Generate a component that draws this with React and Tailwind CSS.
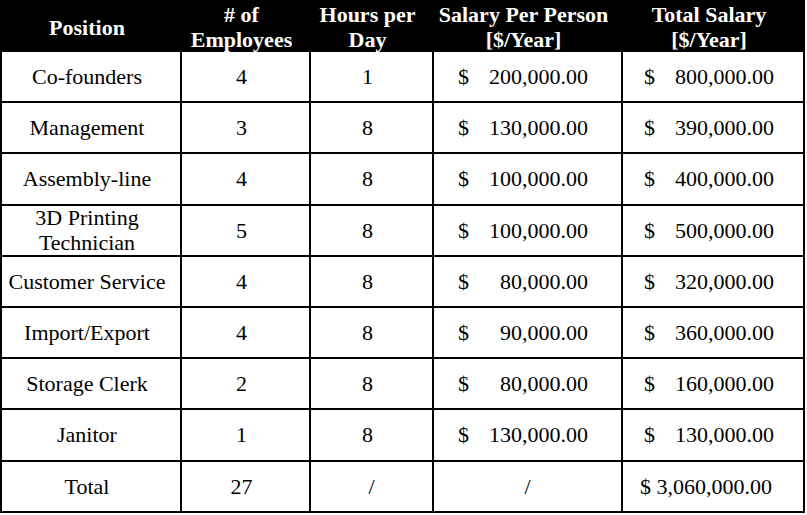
import React from 'react'

const rows = [
  { position: 'Co-founders', employees: '4', hours: '1', salary: '200,000.00', total: '800,000.00' },
  { position: 'Management', employees: '3', hours: '8', salary: '130,000.00', total: '390,000.00' },
  { position: 'Assembly-line', employees: '4', hours: '8', salary: '100,000.00', total: '400,000.00' },
  { position: ['3D Printing', 'Technician'], employees: '5', hours: '8', salary: '100,000.00', total: '500,000.00' },
  { position: 'Customer Service', employees: '4', hours: '8', salary: '80,000.00', total: '320,000.00' },
  { position: 'Import/Export', employees: '4', hours: '8', salary: '90,000.00', total: '360,000.00' },
  { position: 'Storage Clerk', employees: '2', hours: '8', salary: '80,000.00', total: '160,000.00' },
  { position: 'Janitor', employees: '1', hours: '8', salary: '130,000.00', total: '130,000.00' },
]

const headers = [
  ['Position'],
  ['# of', 'Employees'],
  ['Hours per', 'Day'],
  ['Salary Per Person', '[$/Year]'],
  ['Total Salary', '[$/Year]'],
]

const cell = 'bg-white flex items-center justify-center text-center text-black leading-[25px]'

export default function App() {
  return (
    <div className="w-[807px] h-[515px] bg-white" style={{ fontFamily: '"Liberation Serif", "Times New Roman", serif' }}>
      <div className="w-[805px] bg-black grid grid-cols-[178px_127px_121px_187px_180px] grid-rows-[50px_repeat(9,49.2px)] gap-[2px] px-[2px] pb-[2px] text-[22px]">
        {headers.map((lines, i) => (
          <div key={i} className="bg-black text-white font-bold flex flex-col items-center justify-center text-center leading-[25px] pt-[4px] pr-2">
            {lines.map((l) => (
              <span key={l}>{l}</span>
            ))}
          </div>
        ))}

        {rows.map((r, i) => (
          <React.Fragment key={i}>
            <div className={`${cell} flex-col pr-2`}>
              {Array.isArray(r.position) ? r.position.map((l) => <span key={l}>{l}</span>) : r.position}
            </div>
            <div className={`${cell} pr-2`}>{r.employees}</div>
            <div className={`${cell} pr-2`}>{r.hours}</div>
            <div className="bg-white flex items-center justify-between pl-[24px] pr-[33px] text-black">
              <span>$</span>
              <span>{r.salary}</span>
            </div>
            <div className="bg-white flex items-center justify-between pl-[21px] pr-[29px] text-black">
              <span>$</span>
              <span>{r.total}</span>
            </div>
          </React.Fragment>
        ))}

        <div className={`${cell} pr-2`}>Total</div>
        <div className={`${cell} pr-2`}>27</div>
        <div className={`${cell}`}>/</div>
        <div className={`${cell}`}>/</div>
        <div className={`${cell} pr-[14px]`}>$ 3,060,000.00</div>
      </div>
    </div>
  )
}
